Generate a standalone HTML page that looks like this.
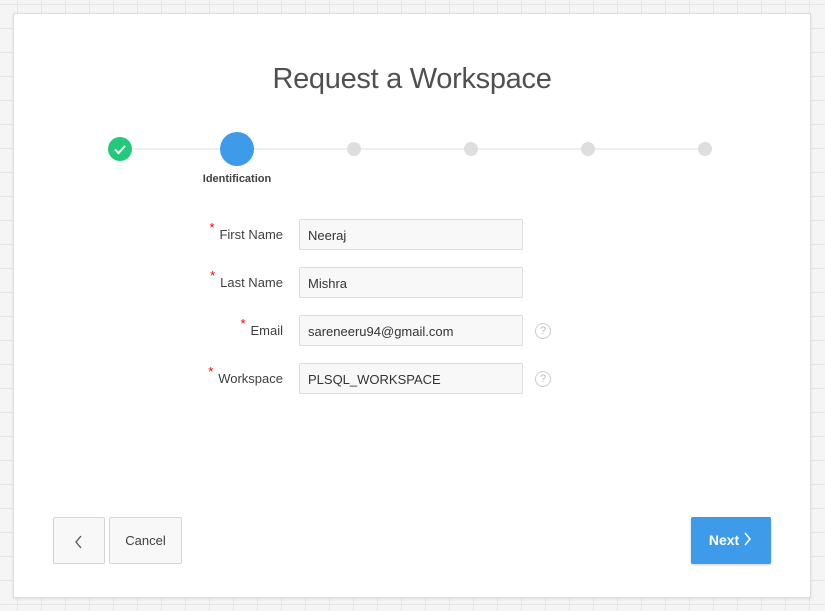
<!DOCTYPE html>
<html><head><style>
body{margin:0;width:825px;height:611px;overflow:hidden;font-family:"Liberation Sans",sans-serif;
background-color:#f5f5f5;background-image:linear-gradient(#e6e6e6 1px,transparent 1px),linear-gradient(90deg,#e6e6e6 1px,transparent 1px);background-size:24px 24px;background-position:17px 4px;position:relative}
.dlg{position:absolute;left:13px;top:13px;width:796px;height:583px;background:#fff;border:1px solid #ddd;box-shadow:0 1px 3px rgba(0,0,0,.1)}
.abs{position:absolute}
h1{position:absolute;left:0;right:0;top:49px;margin:0;text-align:center;font-weight:normal;font-size:29px;color:#505050;letter-spacing:-0.3px}
.line{left:107px;top:134px;width:585px;height:2px;background:#eeeeee}
.dot{border-radius:50%;background:#dedede;width:14px;height:14px;top:128px}
.lbl{right:527px;font-size:13px;color:#404040;text-align:right}
.lbl b{color:#e00;font-weight:normal;position:absolute;left:-10px;top:-7px;font-size:13px}
.in{left:285px;width:224px;height:31px;border:1px solid #dcdcdc;background:#f8f8f8;border-radius:2px;font-size:13px;color:#333;line-height:31px;padding-left:8px;box-sizing:border-box}
.q{left:521px;width:14px;height:14px;border:1.5px solid #ccc;border-radius:50%;color:#bbb;font-size:11px;text-align:center;line-height:14px}
.btn{top:503px;height:47px;border:1px solid #d5d5d5;background:#f8f8f8;border-radius:2px;box-sizing:border-box;font-size:13px;color:#404040;text-align:center;line-height:45px}
</style></head><body>
<div class="dlg">
<h1>Request a Workspace</h1>
<div class="abs line"></div>
<div class="abs" style="left:94px;top:123px;width:24px;height:24px;border-radius:50%;background:#23c97a">
<svg width="24" height="24"><path d="M7 12.5l3.5 3.5 6.5-7" stroke="#fff" stroke-width="2" fill="none"/></svg></div>
<div class="abs" style="left:206px;top:118px;width:34px;height:34px;border-radius:50%;background:#3d9be9"></div>
<div class="abs dot" style="left:333px"></div>
<div class="abs dot" style="left:450px"></div>
<div class="abs dot" style="left:567px"></div>
<div class="abs dot" style="left:684px"></div>
<div class="abs" style="left:173px;top:159px;width:100px;text-align:center;font-size:11px;font-weight:bold;color:#404040">Identification</div>

<div class="abs lbl" style="top:213px"><b>*</b>First Name</div>
<div class="abs in" style="top:205px">Neeraj</div>
<div class="abs lbl" style="top:261px"><b>*</b>Last Name</div>
<div class="abs in" style="top:253px">Mishra</div>
<div class="abs lbl" style="top:309px"><b>*</b>Email</div>
<div class="abs in" style="top:301px">sareneeru94@gmail.com</div>
<div class="abs q" style="top:309px">?</div>
<div class="abs lbl" style="top:357px"><b>*</b>Workspace</div>
<div class="abs in" style="top:349px">PLSQL_WORKSPACE</div>
<div class="abs q" style="top:357px">?</div>

<div class="abs btn" style="left:39px;width:52px"><svg width="12" height="16" style="vertical-align:middle"><path d="M8 2L3 8l5 6" stroke="#555" stroke-width="1.3" fill="none"/></svg></div>
<div class="abs btn" style="left:95px;width:73px">Cancel</div>
<div class="abs btn" style="left:677px;width:80px;background:#3d9be9;border-color:#3d9be9;color:#fff;font-weight:bold;font-size:14px;box-shadow:0 1px 2px rgba(0,0,0,.2)">Next <svg width="10" height="16" style="vertical-align:-2px"><path d="M2 2l5 6-5 6" stroke="#fff" stroke-width="1.5" fill="none"/></svg></div>
</div>
</body></html>
